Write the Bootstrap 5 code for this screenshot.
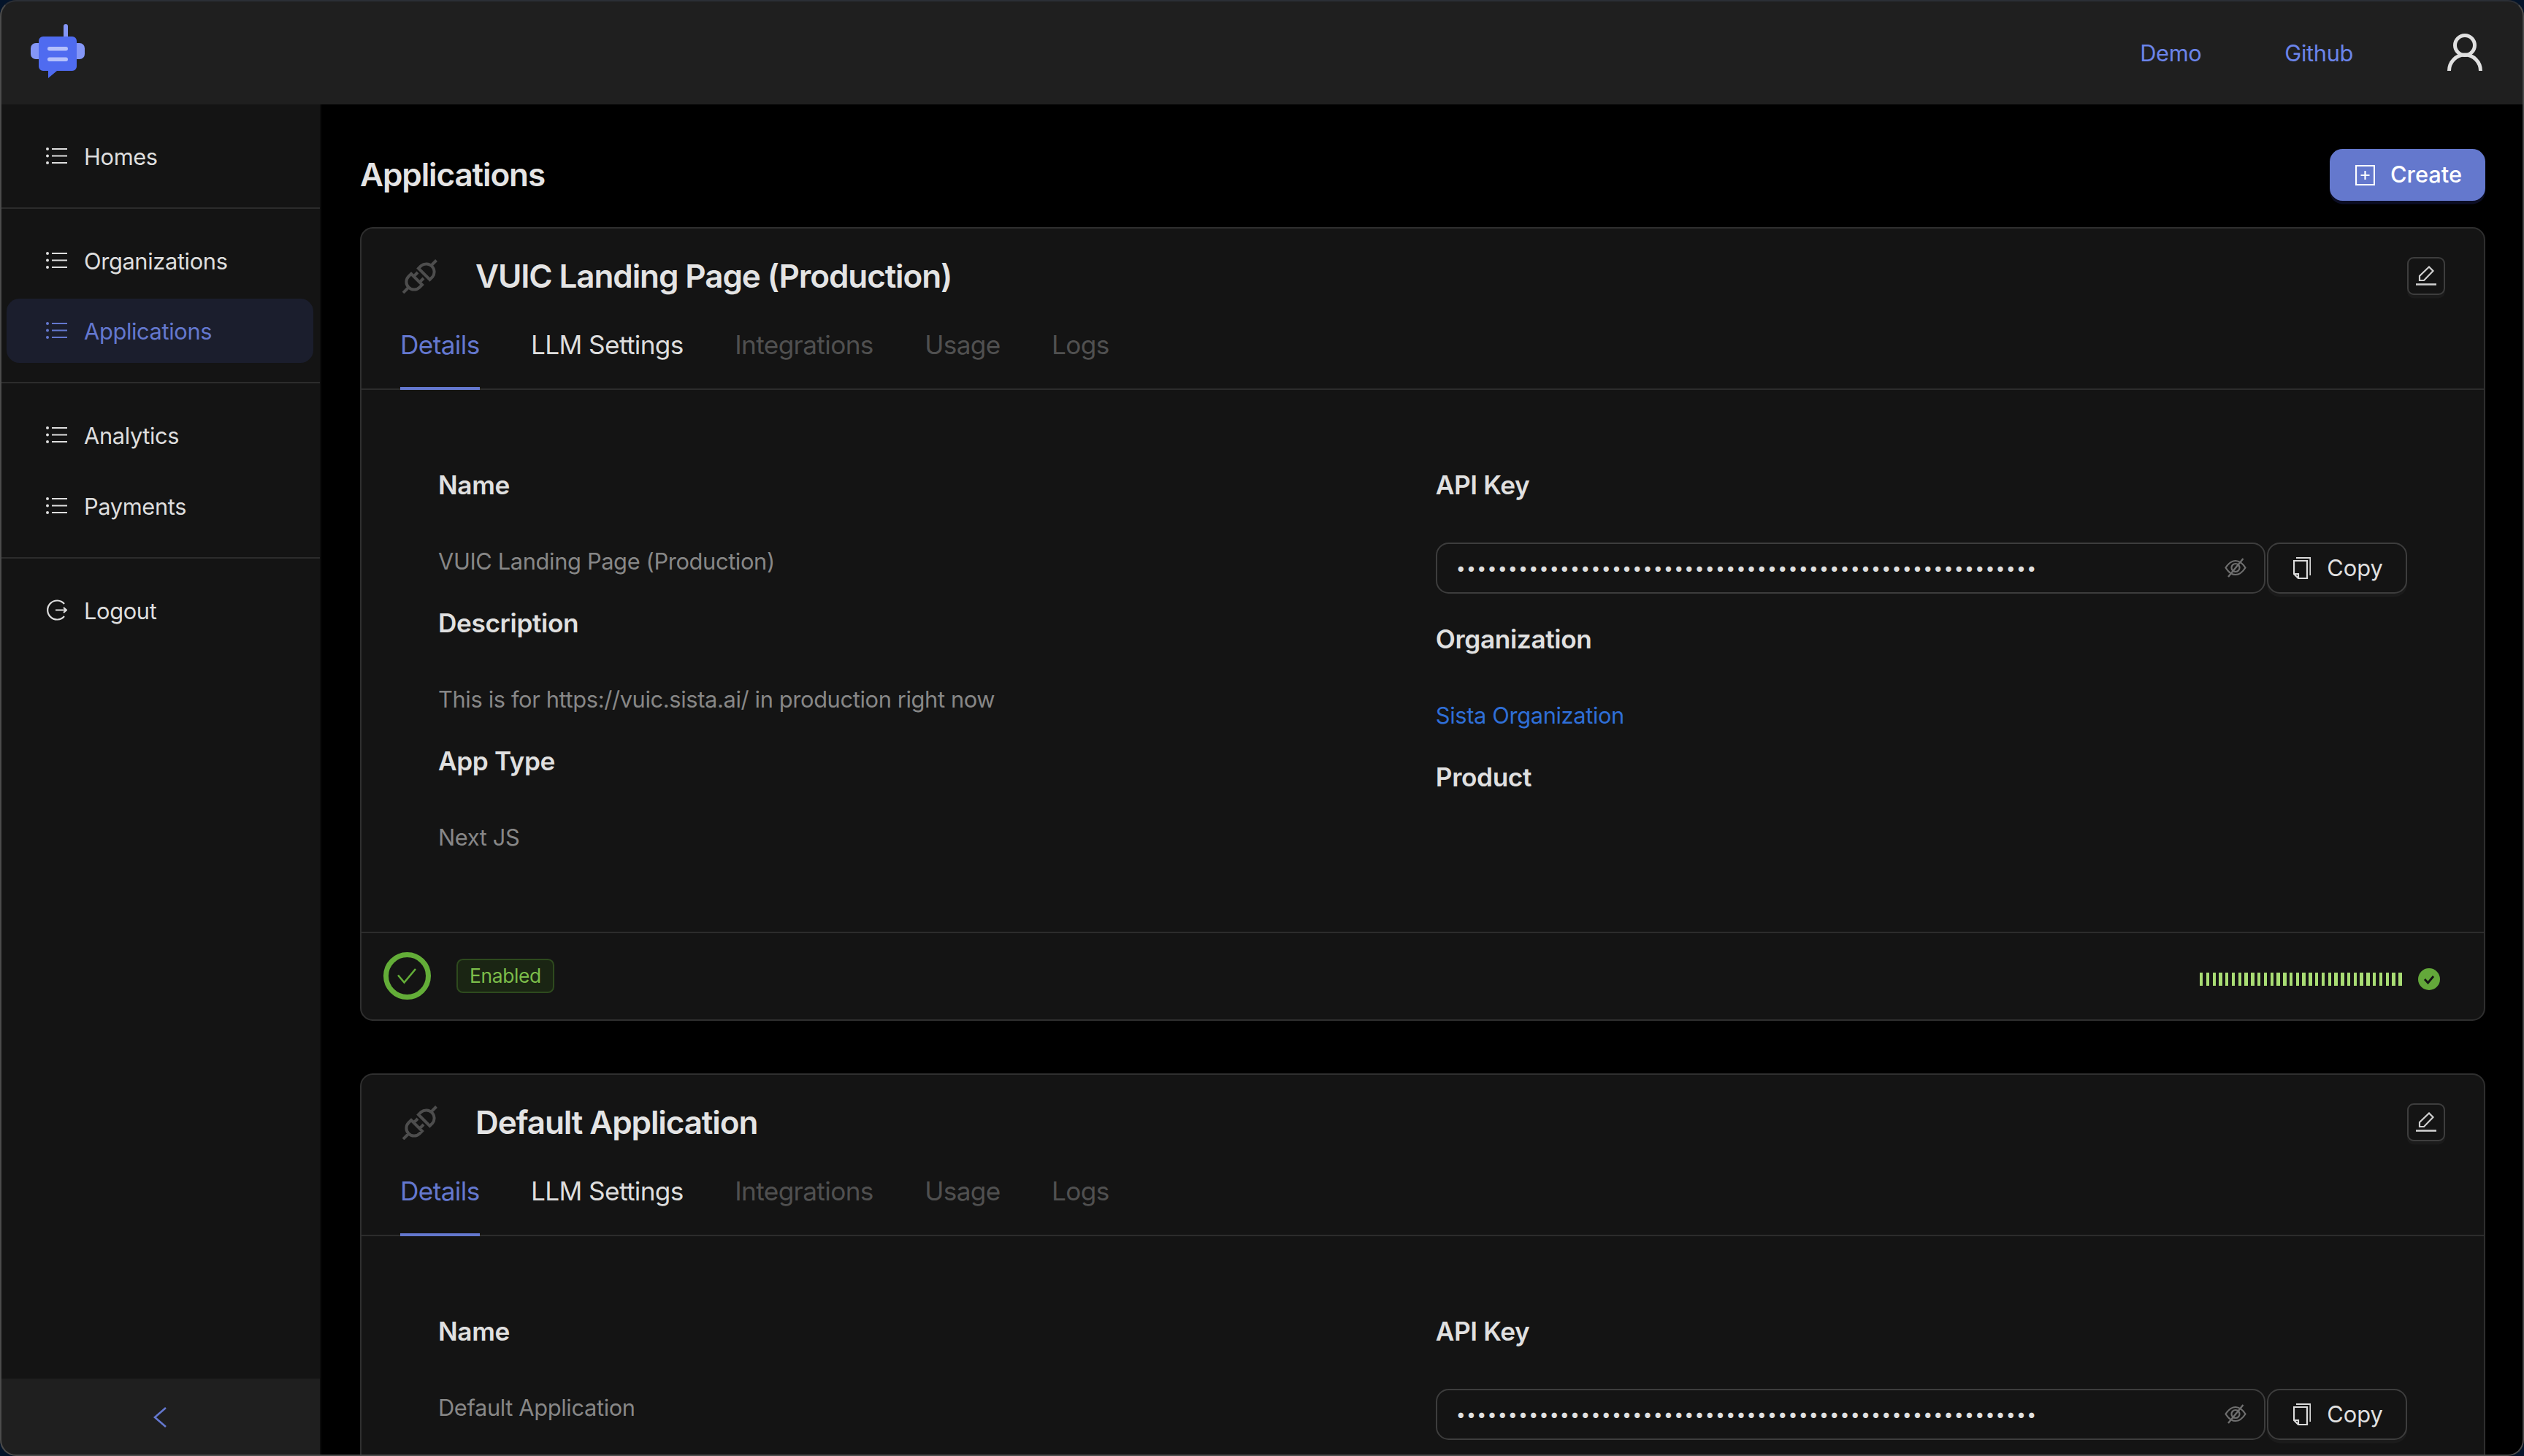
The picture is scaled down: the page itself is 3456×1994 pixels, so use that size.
<!DOCTYPE html>
<html lang="en" data-bs-theme="dark">
<head>
  <meta charset="UTF-8" />
  <title>Applications</title>
  <link href="https://cdn.jsdelivr.net/npm/bootstrap@5.3.0/dist/css/bootstrap.min.css" rel="stylesheet" />
  <style>
    html, body { height: 100%; }
    body {
      background: #000;
      color: #dedede;
      font-family: "Inter", "Liberation Sans", sans-serif;
      font-size: 30.8px;
      letter-spacing: -0.36px;
      overflow: hidden;
    }
    svg { display: block; flex-shrink: 0; }

    .window-frame {
      position: fixed;
      inset: 0;
      pointer-events: none;
      border: 2px solid #4b4b4b;
      border-top-color: #2b2f36;
      border-radius: 22px;
      box-shadow: 0 0 0 30px #04142a;
      z-index: 10;
    }

    .top-bar {
      height: 143px;
      flex: none;
      background: #1f1f1f;
      padding: 0 57px 0 42px;
    }
    .top-link { color: #6b84ea; text-decoration: none; font-size: 30.8px; }
    .top-links { gap: 114px; padding-top: 3px; }
    .user-gap { margin-left: 129px; }
    .brand-logo { margin-top: -3px; }

    .side-bar {
      width: 440px;
      flex: none;
      background: #141414;
      border-right: 2px solid #0b0b0b;
    }
    .side-group { padding: 26.4px 0 26.4px 9px; gap: 8.8px; border-bottom: 2.2px solid #2c2c2c; margin-right: 0; }
    .side-group:nth-last-child(2) { border-bottom: 0; }
    .side-bar .nav-link {
      width: 420px;
      height: 88px;
      padding: 3px 0 0 54px;
      display: flex;
      align-items: center;
      gap: 23px;
      color: #dedede;
      border-radius: 17.6px;
    }
    .side-bar .nav-link svg { margin-top: -3px; }
    .side-bar .nav-link.active { background: #1b1e2d; color: #6478cf; }
    .side-foot { height: 106px; background: #1f1f1f; color: #6478cf; }

    .main-area { padding: 61px 53px 0; min-width: 0; }
    .page-title { font-size: 44px; font-weight: 600; line-height: 71px; margin: 0; color: #e4e4e4; letter-spacing: -1.1px; }
    .btn-create {
      height: 71px;
      width: 213px;
      background: #6478cd;
      border: 0;
      border-radius: 17.6px;
      color: #fff;
      font-size: 30.8px;
      font-weight: 500;
      gap: 21px;
      box-shadow: 0 4.4px 0 #0b0d24;
      padding: 0 0 0 3px;
    }
    .page-head { margin-bottom: 36px; }

    .app-card {
      background: #141414;
      border: 2.2px solid #2f2f2f;
      border-radius: 17.6px;
      margin-bottom: 72px;
      color: #dedede;
    }
    .app-card .card-header { background: none; border: 0; border-bottom: 2.2px solid #2c2c2c; border-radius: 0; padding: 27px 53px 0 53px; }
    .head-row { height: 76px; }
    .app-icon { margin-left: 3px; margin-right: 52px; }
    .app-name { font-size: 44px; font-weight: 600; margin: 0; color: #e4e4e4; line-height: 76px; letter-spacing: -1.1px; }
    .btn-edit {
      width: 52px;
      height: 52px;
      padding: 0;
      background: #141414;
      border: 2.2px solid #3d3d3d;
      border-radius: 9px;
      box-shadow: 0 4.4px 0 #1b1b1b;
    }
    .app-tabs { gap: 70.4px; margin-top: 30px; margin-bottom: -2.2px; }
    .app-tabs .nav-link {
      padding: 0 0 31px;
      line-height: 53px;
      font-size: 35.2px;
      letter-spacing: -0.62px;
      color: #dedede;
      border-bottom: 4.4px solid transparent;
    }
    .app-tabs .nav-link.active { color: #6478cf; border-bottom-color: #6478cf; }
    .app-tabs .nav-link.disabled { color: #505050; }

    .app-card .card-body { padding: 105px 105px 106px 105px; }
    .field-row { --bs-gutter-x: 35.6px; --bs-gutter-y: 0; }
    .field-label { font-size: 35.2px; font-weight: 600; line-height: 50px; margin-bottom: 54px; color: #e0e0e0; }
    .field-value { line-height: 46px; padding-top: 3px; margin-bottom: 36px; color: #878787; }
    .field-value:last-child { margin-bottom: 0; }
    .field-link { color: #2f6fd8; text-decoration: none; }

    .key-box {
      height: 70px;
      border: 2.2px solid #3d3d3d;
      border-radius: 17.6px;
      padding-right: 24px;
      margin-bottom: 37px;
      min-width: 0;
    }
    .key-box .form-control {
      background: none;
      border: 0;
      box-shadow: none;
      padding: 0 0 0 26px;
      height: 100%;
      color: #e0e0e0;
      font-family: "Inter", sans-serif;
      font-size: 23px;
      letter-spacing: 1.27px;
    }
    .btn-copy {
      width: 192px;
      height: 70px;
      flex: none;
      margin-left: 2px;
      padding: 0 0 0 3px;
      gap: 22px;
      color: #e0e0e0;
      background: #141414;
      border: 2.2px solid #3d3d3d;
      border-radius: 17.6px;
      font-size: 30.8px;
      box-shadow: 0 4.4px 0 #1b1b1b;
    }

    .app-card .card-footer {
      height: 120px;
      background: none;
      border: 0;
      border-top: 2.2px solid #2c2c2c;
      padding: 0 60px 0 30px;
    }
    .status-tag {
      height: 47px;
      margin-left: 35px;
      padding: 0 16px;
      background: #1a2513;
      border: 2.2px solid #2e4a1e;
      border-radius: 8.8px;
      color: #7cbd4a;
      font-size: 26.4px;
      line-height: 42px;
    }
    .health-bars { margin-top: 9px; gap: 22px; }
  </style>
</head>
<body>

  <!-- shared icons -->
  <svg width="0" height="0" class="position-absolute">
    <symbol id="i-list" viewBox="0 0 29 23">
      <circle cx="2" cy="2" r="2" fill="currentColor"/><circle cx="2" cy="11.5" r="2" fill="currentColor"/><circle cx="2" cy="21" r="2" fill="currentColor"/>
      <path d="M8 2H29M8 11.5H29M8 21H29" stroke="currentColor" stroke-width="2" fill="none"/>
    </symbol>
    <symbol id="i-plug" viewBox="0 0 48 48">
      <path d="M46.5 2.5L40 9M22 13.5L37.5 29L41 25.5A11 11 0 0 0 25.5 10ZM12 21L27 36L23.5 39.5A10.6 10.6 0 0 1 8.5 24.5ZM1 47L8 40M21 19L15 25M29 27L23 33" stroke="#4d4d4d" stroke-width="4" fill="none"/>
    </symbol>
    <symbol id="i-edit" viewBox="0 0 28 28">
      <path d="M5 20V14L18 1.5L23.5 7L11 20Z" stroke="#cfcfcf" stroke-width="2.2" fill="none"/>
      <path d="M0 25.5H28" stroke="#cfcfcf" stroke-width="2.6"/>
    </symbol>
    <symbol id="i-eye" viewBox="0 0 30 27">
      <path d="M1.5 13.5C6 6.5 10 4 15 4S24 6.5 28.5 13.5C24 20.5 20 23 15 23S6 20.5 1.5 13.5Z" stroke="#6f6f6f" stroke-width="2.2" fill="none"/>
      <circle cx="15" cy="13.5" r="5.5" stroke="#6f6f6f" stroke-width="2.2" fill="none"/>
      <path d="M25.5 1L5 26" stroke="#6f6f6f" stroke-width="2.4"/>
    </symbol>
    <symbol id="i-copy" viewBox="0 0 24 30">
      <path d="M4 1H23.5V25" stroke="#dcdcdc" stroke-width="2.2" fill="none"/>
      <path d="M1 5H19V29H7L1 23ZM1 23H7V29" stroke="#dcdcdc" stroke-width="2.2" fill="none"/>
    </symbol>
    <symbol id="i-done" viewBox="0 0 65 65">
      <circle cx="32.5" cy="32.5" r="29" stroke="#63ad38" stroke-width="7" fill="none"/>
      <path d="M20 31.5L28.5 41.5L44 23" stroke="#63ad38" stroke-width="2.6" fill="none"/>
    </symbol>
    <symbol id="i-bars" viewBox="0 0 277 18">
      <g fill="#a9dd74" shape-rendering="crispEdges">
        <rect x="0" width="4" height="18"/><rect x="9" width="4" height="18"/><rect x="18" width="4" height="18"/><rect x="26" width="5" height="18"/>
        <rect x="35" width="4" height="18"/><rect x="44" width="4" height="18"/><rect x="53" width="4" height="18"/><rect x="61" width="5" height="18"/>
        <rect x="70" width="5" height="18"/><rect x="79" width="4" height="18"/><rect x="88" width="4" height="18"/><rect x="97" width="4" height="18"/>
        <rect x="105" width="5" height="18"/><rect x="114" width="5" height="18"/><rect x="123" width="4" height="18"/><rect x="132" width="4" height="18"/>
        <rect x="140" width="5" height="18"/><rect x="149" width="5" height="18"/><rect x="158" width="4" height="18"/><rect x="167" width="4" height="18"/>
        <rect x="176" width="4" height="18"/><rect x="184" width="5" height="18"/><rect x="193" width="5" height="18"/><rect x="202" width="4" height="18"/>
        <rect x="211" width="4" height="18"/><rect x="219" width="5" height="18"/><rect x="228" width="5" height="18"/><rect x="237" width="4" height="18"/>
        <rect x="246" width="4" height="18"/><rect x="255" width="4" height="18"/><rect x="263" width="5" height="18"/><rect x="272" width="5" height="18"/>
      </g>
    </symbol>
    <symbol id="i-ok" viewBox="0 0 30 30">
      <circle cx="15" cy="15" r="15" fill="#63a83a"/>
      <path d="M9 15L13.5 20L21 11" stroke="#141414" stroke-width="2.8" fill="none"/>
    </symbol>
  </svg>

  <div class="d-flex flex-column vh-100">
    <nav class="navbar top-bar d-flex justify-content-between flex-nowrap">
      <a href="#" aria-label="Home">
        <svg class="brand-logo" width="74" height="74" viewBox="0 0 74 74">
          <rect x="45" y="0" width="6" height="20" rx="3" fill="#8496f7"/>
          <rect x="0" y="26" width="74" height="22" rx="7" fill="#8496f7"/>
          <path d="M17 17H57A6 6 0 0 1 63 23V58A6 6 0 0 1 57 64H36L24 74V64H17A6 6 0 0 1 11 58V23A6 6 0 0 1 17 17Z" fill="#4f6bf0"/>
          <rect x="23" y="31" width="28" height="5.5" rx="2.7" fill="#b4c0fb"/>
          <rect x="23" y="45.5" width="28" height="5.5" rx="2.7" fill="#b4c0fb"/>
        </svg>
      </a>
      <div class="d-flex align-items-center">
        <div class="d-flex top-links">
          <a class="top-link" href="#">Demo</a>
          <a class="top-link" href="#">Github</a>
        </div>
        <a class="user-gap" href="#" aria-label="Account">
          <svg width="48" height="51" viewBox="0 0 48 51">
            <circle cx="24" cy="16" r="13.5" stroke="#e0e0e0" stroke-width="5" fill="none"/>
            <path d="M2.5 51A21.5 22 0 0 1 45.5 51" stroke="#e0e0e0" stroke-width="5" fill="none"/>
          </svg>
        </a>
      </div>
    </nav>

    <div class="d-flex flex-grow-1 overflow-hidden">
      <aside class="side-bar d-flex flex-column">
        <div class="nav flex-column side-group">
          <a class="nav-link" href="#"><svg width="29" height="23"><use href="#i-list"/></svg>Homes</a>
        </div>
        <div class="nav flex-column side-group">
          <a class="nav-link" href="#"><svg width="29" height="23"><use href="#i-list"/></svg>Organizations</a>
          <a class="nav-link active" href="#"><svg width="29" height="23"><use href="#i-list"/></svg>Applications</a>
        </div>
        <div class="nav flex-column side-group">
          <a class="nav-link" href="#"><svg width="29" height="23"><use href="#i-list"/></svg>Analytics</a>
          <a class="nav-link" href="#"><svg width="29" height="23"><use href="#i-list"/></svg>Payments</a>
        </div>
        <div class="nav flex-column side-group flex-grow-1">
          <a class="nav-link" href="#">
            <svg width="29" height="29" viewBox="0 0 29 29">
              <path d="M25 6A13 13 0 1 0 25 23" stroke="currentColor" stroke-width="2.2" fill="none"/>
              <path d="M13 14.5H28M24 11L28 14.5L24 18" stroke="currentColor" stroke-width="2.2" fill="none"/>
            </svg>Logout</a>
        </div>
        <div class="side-foot d-flex align-items-center justify-content-center">
          <svg width="18" height="28" viewBox="0 0 18 28"><path d="M17 1L2 14L17 27" stroke="#6478cf" stroke-width="2.6" fill="none"/></svg>
        </div>
      </aside>

      <main class="main-area flex-grow-1 overflow-hidden">
        <div class="page-head d-flex justify-content-between align-items-center">
          <h1 class="page-title">Applications</h1>
          <button class="btn btn-create d-flex align-items-center justify-content-center">
            <svg width="27" height="28" viewBox="0 0 27 28">
              <path d="M1 1H26V27H1ZM13.5 8V20M7.5 14H19.5" stroke="#fff" stroke-width="2.2" fill="none"/>
            </svg>Create</button>
        </div>

        <div class="card app-card">
          <div class="card-header">
            <div class="d-flex align-items-center head-row">
              <svg class="app-icon" width="48" height="48"><use href="#i-plug"/></svg>
              <h2 class="app-name flex-grow-1">VUIC Landing Page (Production)</h2>
              <button class="btn btn-edit d-flex align-items-center justify-content-center" aria-label="Edit"><svg width="28" height="28"><use href="#i-edit"/></svg></button>
            </div>
            <ul class="nav app-tabs">
              <li class="nav-item"><a class="nav-link active" href="#">Details</a></li>
              <li class="nav-item"><a class="nav-link" href="#">LLM Settings</a></li>
              <li class="nav-item"><a class="nav-link disabled" href="#">Integrations</a></li>
              <li class="nav-item"><a class="nav-link disabled" href="#">Usage</a></li>
              <li class="nav-item"><a class="nav-link disabled" href="#">Logs</a></li>
            </ul>
          </div>
          <div class="card-body">
            <div class="row field-row">
              <div class="col-6">
                <div class="field-label">Name</div>
                <div class="field-value">VUIC Landing Page (Production)</div>
                <div class="field-label">Description</div>
                <div class="field-value">This is for https://vuic.sista.ai/ in production right now</div>
                <div class="field-label">App Type</div>
                <div class="field-value">Next JS</div>
              </div>
              <div class="col-6">
                <div class="field-label">API Key</div>
                <div class="d-flex">
                  <div class="key-box d-flex align-items-center flex-grow-1">
                    <input class="form-control" type="password" readonly value="11111111111111111111111111111111111111111111111111111111" aria-label="API Key" />
                    <svg width="30" height="27"><use href="#i-eye"/></svg>
                  </div>
                  <button class="btn btn-copy d-flex align-items-center justify-content-center"><svg width="24" height="30"><use href="#i-copy"/></svg>Copy</button>
                </div>
                <div class="field-label">Organization</div>
                <div class="field-value"><a class="field-link" href="#">Sista Organization</a></div>
                <div class="field-label">Product</div>
              </div>
            </div>
          </div>
          <div class="card-footer d-flex align-items-center">
            <svg width="65" height="65"><use href="#i-done"/></svg>
            <span class="status-tag">Enabled</span>
            <div class="health-bars d-flex align-items-center ms-auto">
              <svg width="277" height="18"><use href="#i-bars"/></svg>
              <svg width="30" height="30"><use href="#i-ok"/></svg>
            </div>
          </div>
        </div>

        <div class="card app-card">
          <div class="card-header">
            <div class="d-flex align-items-center head-row">
              <svg class="app-icon" width="48" height="48"><use href="#i-plug"/></svg>
              <h2 class="app-name flex-grow-1">Default Application</h2>
              <button class="btn btn-edit d-flex align-items-center justify-content-center" aria-label="Edit"><svg width="28" height="28"><use href="#i-edit"/></svg></button>
            </div>
            <ul class="nav app-tabs">
              <li class="nav-item"><a class="nav-link active" href="#">Details</a></li>
              <li class="nav-item"><a class="nav-link" href="#">LLM Settings</a></li>
              <li class="nav-item"><a class="nav-link disabled" href="#">Integrations</a></li>
              <li class="nav-item"><a class="nav-link disabled" href="#">Usage</a></li>
              <li class="nav-item"><a class="nav-link disabled" href="#">Logs</a></li>
            </ul>
          </div>
          <div class="card-body">
            <div class="row field-row">
              <div class="col-6">
                <div class="field-label">Name</div>
                <div class="field-value">Default Application</div>
              </div>
              <div class="col-6">
                <div class="field-label">API Key</div>
                <div class="d-flex">
                  <div class="key-box d-flex align-items-center flex-grow-1">
                    <input class="form-control" type="password" readonly value="11111111111111111111111111111111111111111111111111111111" aria-label="API Key" />
                    <svg width="30" height="27"><use href="#i-eye"/></svg>
                  </div>
                  <button class="btn btn-copy d-flex align-items-center justify-content-center"><svg width="24" height="30"><use href="#i-copy"/></svg>Copy</button>
                </div>
              </div>
            </div>
          </div>
        </div>
      </main>
    </div>
  </div>

  <div class="window-frame"></div>

  <script src="https://cdn.jsdelivr.net/npm/bootstrap@5.3.0/dist/js/bootstrap.bundle.min.js"></script>
</body>
</html>
